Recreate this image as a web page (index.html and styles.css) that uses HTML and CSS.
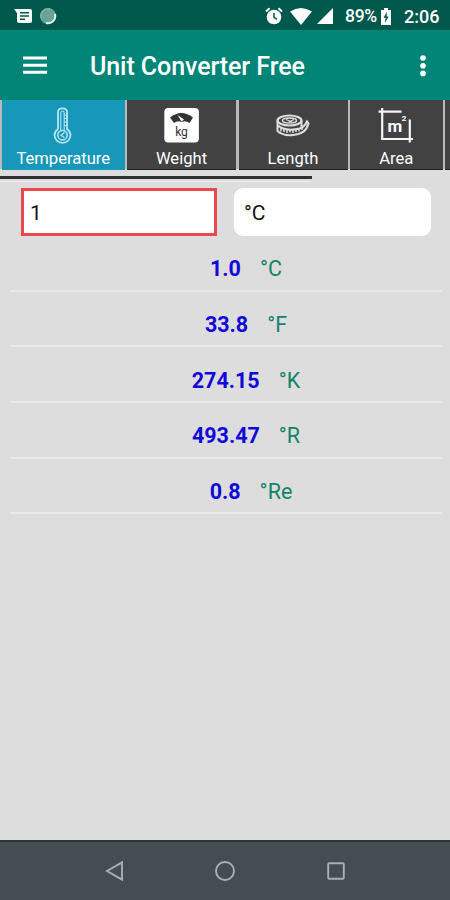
FILE: index.html
```
<!DOCTYPE html>
<html lang="en">

<head>
    <meta charset="utf-8">
    <meta name="viewport" content="width=device-width, initial-scale=1.0">
    <title>Unit Converter Free</title>
    <link rel="stylesheet" href="styles.css">
</head>

<body>
    <div class="statusbar">
        <svg class="message" width="18" height="16" viewBox="0 0 18 16">
            <path d="M0 1H16Q18 1 18 3V13Q18 15 16 15H5Q3 15 3 13V5Z" fill="#fff"/>
            <path d="M6 4.7H15M6 8H15M6 11.3H11" stroke="#00574b" stroke-width="1.5"/>
        </svg>
        <svg class="sync" width="18" height="18" viewBox="0 0 18 18">
            <circle cx="9" cy="9" r="8" fill="#69a398"/>
            <path d="M16 7A7.3 7.3 0 0 1 7 16" fill="none" stroke="#e8f3f1" stroke-width="2"/>
            <path d="M2 11A7.3 7.3 0 0 1 11 2" fill="none" stroke="#91bdb5" stroke-width="1"/>
        </svg>
        <svg class="alarm" width="18" height="18" viewBox="0 0 18 18">
            <circle cx="9" cy="10" r="7.3" fill="#fff"/>
            <path d="M1 4.5L4.5 1.3M17 4.5L13.5 1.3" stroke="#fff" stroke-width="2"/>
            <path d="M9 6V10.3L12 12.3" fill="none" stroke="#00574b" stroke-width="1.5"/>
        </svg>
        <svg class="wifi" width="22" height="17" viewBox="0 0 22 17">
            <path d="M0 3.5Q11 -3.5 22 3.5L11 17Z" fill="#fff"/>
        </svg>
        <svg class="signal" width="16" height="16" viewBox="0 0 16 16">
            <path d="M16 0V16H0Z" fill="#fff"/>
        </svg>
        <span class="percent">89%</span>
        <svg class="battery" width="10" height="17" viewBox="0 0 10 17">
            <path d="M3 0H7V2H10V17H0V2H3Z" fill="#fff"/>
            <path d="M6 3.5L2.5 9.8H4.6L4 15L7.6 8.5H5.5Z" fill="#00574b"/>
        </svg>
        <span class="clock">2:06</span>
    </div>

    <header>
        <svg class="burger" width="24" height="18" viewBox="0 0 24 18">
            <path d="M0 2H24M0 9.2H24M0 16.3H24" stroke="#fff" stroke-width="2.9"/>
        </svg>
        <h1>Unit Converter Free</h1>
        <svg class="more" width="6" height="22" viewBox="0 0 6 22">
            <circle cx="3" cy="3" r="2.8" fill="#fff"/>
            <circle cx="3" cy="10.7" r="2.8" fill="#fff"/>
            <circle cx="3" cy="18.4" r="2.8" fill="#fff"/>
        </svg>
    </header>

    <nav>
        <div class="tab temperature valgt">
            <svg width="40" height="40" viewBox="0 0 40 40" fill="none" stroke="#b5e6f2">
                <path d="M15 24V7Q15 3.3 19.5 3.3Q24 3.3 24 7V24Q27.500 26.500 27.500 30.300A8 7.500 0 0 1 11.500 30.300Q11.500 26.500 15 24Z" stroke-width="1.8"/>
                <path d="M17.800 26V8Q17.800 6 19.500 6Q21.200 6 21.200 8V26" stroke-width="1.1"/>
                <path d="M24 10H21.200M24 13.500H21.200M24 17H21.200M24 20.500H21.200" stroke-width="1"/>
                <circle cx="19.500" cy="30.200" r="4.700" stroke-width="1.600"/>
                <path d="M21.500 27.500L18 30.500L21.500 32.500" stroke-width="1.400"/>
            </svg>
            <span>Temperature</span>
        </div>
        <div class="tab weight">
            <svg width="40" height="40" viewBox="0 0 40 40">
                <rect x="2.300" y="3" width="34.600" height="34.500" rx="4" fill="#fff"/>
                <path d="M8 12.500Q19.500 3.500 31 12.500L27.500 18Q23.500 15 19.500 17Q15.500 15 12 18Z" fill="#333"/>
                <path d="M15.500 10L19.500 16.500L22 14.500Z" fill="#fff"/>
                <text x="19.500" y="30.500" text-anchor="middle" class="kg">kg</text>
            </svg>
            <span>Weight</span>
        </div>
        <div class="tab length">
            <svg width="40" height="40" viewBox="0 0 40 40" fill="none" stroke="#dedede">
                <ellipse cx="16.500" cy="15.500" rx="12" ry="5" stroke-width="2.200"/>
                <ellipse cx="16.500" cy="15.500" rx="7" ry="2.500" stroke-width="1.400"/>
                <path d="M13 14.500L19 17M16 17L21 14.500" stroke-width="1.300"/>
                <path d="M4.500 15.500V26Q10 31 20 30Q33 29 35.500 18.500L34 16.500Q31.500 22 26.500 23.500Q12 27 4.500 20M28.500 15.500V23" stroke-width="2"/>
                <path d="M8 23V26.500M11 24V27M14 25V28M17 25V27.500M20 25V28M23 24.500V27M26 24V26.500M29 22.500V25" stroke-width="1.500"/>
            </svg>
            <span>Length</span>
        </div>
        <div class="tab area">
            <svg width="40" height="40" viewBox="0 0 40 40">
                <path d="M2.500 6.700H25.500M6.200 3V34H37M33.800 14.500V37.500" fill="none" stroke="#f5f5f5" stroke-width="2.200"/>
                <text x="11.500" y="27" class="m">m<tspan class="two" dx="-0.500" dy="-11">2</tspan></text>
            </svg>
            <span>Area</span>
        </div>
        <div class="tab next"></div>
    </nav>
    <div class="scrollbar"></div>
    <div class="scrollbar-light"></div>

    <main>
        <section class="inputs">
            <div class="amount">1</div>
            <div class="unit">°C</div>
        </section>

        <section class="results">
            <p><b>1.0</b><span>°C</span></p>
            <p><b>33.8</b><span>°F</span></p>
            <p><b>274.15</b><span>°K</span></p>
            <p><b>493.47</b><span>°R</span></p>
            <p class="reaumur"><b>0.8</b><span>°Re</span></p>
        </section>
    </main>

    <footer>
        <svg width="20" height="22" viewBox="0 0 20 22">
            <path d="M18 2.500V19.500L3 11Z"/>
        </svg>
        <svg width="22" height="22" viewBox="0 0 22 22">
            <circle cx="11" cy="11" r="9"/>
        </svg>
        <svg width="20" height="22" viewBox="0 0 20 22">
            <rect x="2.200" y="3.200" width="15.600" height="15.600" rx="1"/>
        </svg>
    </footer>
</body>

</html>
```
FILE: styles.css
```
* {
    box-sizing: border-box;
}

body {
    margin: 0;
    height: 900px;
    display: flex;
    flex-direction: column;
    overflow: hidden;
    background-color: #dddddd;
    font-family: Roboto, sans-serif;
}

svg {
    display: block;
    flex: none;
}

.statusbar {
    height: 30px;
    flex: none;
    display: flex;
    align-items: center;
    padding: 2px 11px 0 14px;
    background-color: #00574b;
    color: #fff;
    font-size: 18px;
    font-weight: 500;
    white-space: nowrap;
}

.sync {
    margin-left: 7px;
}

.alarm {
    margin-left: auto;
}

.wifi {
    margin-left: 7px;
}

.signal {
    margin-left: 5px;
}

.percent {
    width: 33px;
    margin-left: 12px;
    font-size: 17.500px;
    letter-spacing: -0.300px;
}

.battery {
    margin-left: 3px;
}

.clock {
    width: 35px;
    margin-left: 13px;
}

header {
    height: 70px;
    flex: none;
    display: flex;
    align-items: center;
    padding: 2px 24px 0 23px;
    background-color: #008577;
}

.burger {
    margin-top: -2px;
}

h1 {
    margin: 1px 0 0 43px;
    color: #fff;
    font-size: 25px;
    font-weight: 500;
    letter-spacing: -0.080px;
    white-space: nowrap;
}

.more {
    margin: -1px 0 0 auto;
}

nav {
    height: 69px;
    flex: none;
    display: grid;
    grid-template-columns: 122.500px 109px 109px 92.500px 5px;
    column-gap: 2.500px;
    padding-left: 2px;
    background-color: #b9b9b9;
}

.tab {
    display: flex;
    flex-direction: column;
    align-items: center;
    padding-top: 5px;
    border-bottom: 1px solid #222;
    background-color: #424242;
    color: #fff;
    font-size: 16.600px;
    line-height: 20px;
}

.tab span {
    margin-top: 4px;
}

.valgt {
    border-bottom-color: #1797b9;
    background-color: #1797b9;
}

.kg {
    fill: #333;
    font-size: 12px;
}

.m {
    fill: #fff;
    font-size: 17px;
    font-weight: 700;
}

.two {
    font-size: 8px;
}

.scrollbar {
    width: 312px;
    height: 3px;
    flex: none;
    margin-top: 7px;
    background-color: #303030;
}

.scrollbar-light {
    width: 310px;
    height: 1px;
    flex: none;
    margin-top: 2px;
    background-color: #ececec;
}

main {
    flex: 1;
}

.inputs {
    display: grid;
    grid-template-columns: 196px 197px;
    column-gap: 17px;
    padding: 6px 0 0 21px;
    font-size: 21px;
}

.amount,
.unit {
    height: 48px;
    display: flex;
    align-items: center;
    padding-top: 2px;
    background-color: #fff;
    color: #111;
}

.amount {
    padding-left: 6px;
    border: 3px solid #e9494c;
}

.unit {
    padding-left: 10px;
    border-radius: 9px;
}

.results {
    padding: 0 8px 0 10px;
}

.results p {
    height: 55.700px;
    display: flex;
    justify-content: center;
    align-items: center;
    gap: 19px;
    margin: 0;
    padding: 12px 0 0 40px;
    border-bottom: 2px solid #eaeaea;
    font-size: 21.500px;
}

.results .reaumur {
    padding-left: 50px;
}

.results b {
    color: #1208d8;
}

.results span {
    color: #15826c;
}

footer {
    height: 60px;
    flex: none;
    display: flex;
    justify-content: center;
    align-items: center;
    gap: 90px;
    border-top: 2px solid #283638;
    background-color: #454d52;
}

footer path,
footer circle,
footer rect {
    fill: none;
    stroke: #a9b0b3;
    stroke-width: 1.900;
}
```
